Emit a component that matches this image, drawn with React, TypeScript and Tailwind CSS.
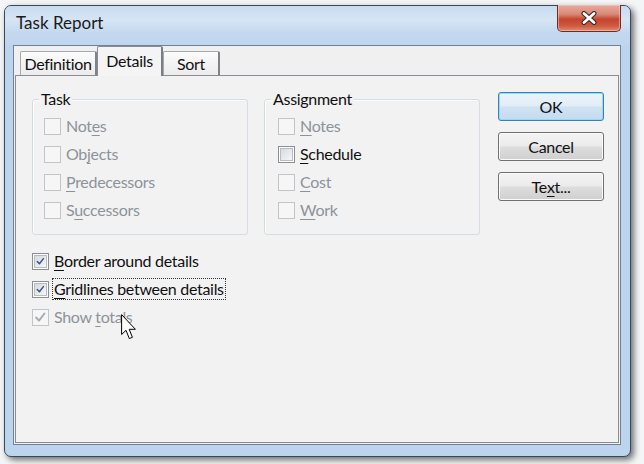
import type { ReactNode } from 'react';

const FONT = { fontFamily: 'Lato, "Noto Sans", sans-serif' };

function Check({ color }: { color: string }) {
  return (
    <svg viewBox="0 0 17 17" className="h-[15px] w-[15px]">
      <path d="M3.5 8.5 L6.8 12 L13 4" fill="none" stroke={color} strokeWidth="2.2" strokeLinecap="round" strokeLinejoin="round" />
    </svg>
  );
}

interface BoxProps {
  checked?: boolean;
  disabled?: boolean;
}

function Box({ checked, disabled }: BoxProps) {
  if (disabled) {
    return (
      <span className="flex h-[17px] w-[17px] shrink-0 items-center justify-center border border-[#c2c4c7] bg-[#f6f6f6]">
        {checked && <Check color="#a8abb0" />}
      </span>
    );
  }
  return (
    <span className="flex h-[17px] w-[17px] shrink-0 items-center justify-center border border-[#8b8e93] bg-[#fdfdfd] p-[1px]">
      <span className="flex h-full w-full items-center justify-center border border-[#b8bcc2] bg-[linear-gradient(135deg,#d8dadd,#f6f6f7)]">
        {checked && <Check color="#3d5088" />}
      </span>
    </span>
  );
}

interface RowProps extends BoxProps {
  label: ReactNode;
  focused?: boolean;
}

function CheckRow({ label, checked, disabled, focused }: RowProps) {
  return (
    <div className="flex h-[22px] items-center gap-[3px]">
      <Box checked={checked} disabled={disabled} />
      <span
        className={
          'border px-[1px] leading-[20px] ' +
          (focused ? 'border-dotted border-[#333]' : 'border-transparent') +
          (disabled ? ' text-[#8d929a]' : ' text-[#101010]')
        }
      >
        {label}
      </span>
    </div>
  );
}

function Key({ children }: { children: ReactNode }) {
  return <span className="underline decoration-1 underline-offset-[3px]">{children}</span>;
}

function Group({ title, children, className }: { title: string; children: ReactNode; className?: string }) {
  return (
    <div className={'relative h-[136px] w-[216px] rounded-[3px] border border-[#d3dde3] shadow-[inset_1px_1px_0_#fff]' + (className ?? '')}>
      <span className="absolute left-[6px] top-[-12px] bg-[#f2f2f2] px-[2px] leading-[22px] text-[#101010]">{title}</span>
      {children}
    </div>
  );
}

function Button({ children, primary }: { children: ReactNode; primary?: boolean }) {
  return (
    <div
      className={
        'flex h-[29px] w-[106px] items-center justify-center rounded-[3px] border text-[#111] ' +
        (primary
          ? 'border-[#3c7fb1] bg-[linear-gradient(180deg,#eaf3fb_0%,#e1edf7_48%,#cfe2f2_52%,#c4dbef_100%)] shadow-[inset_0_0_0_1px_#8fdcf7]'
          : 'border-[#707070] bg-[linear-gradient(180deg,#f4f4f4_0%,#ebebeb_48%,#dddddd_52%,#cfcfcf_100%)] shadow-[inset_0_0_0_1px_#fbfbfb]')
      }
    >
      {children}
    </div>
  );
}

function CloseButton() {
  return (
    <div className="-mt-px flex h-[27px] w-[64px] items-center justify-center rounded-b-[5px] border border-t-0 border-[#6e2b20] bg-[linear-gradient(180deg,#e8aa9e_0%,#d98a78_35%,#c4452e_55%,#cd5a40_80%,#e08d70_100%)] shadow-[inset_0_0_0_1px_rgba(255,210,200,0.5)]">
      <svg viewBox="0 0 18 14" className="h-[14px] w-[18px]">
        <path d="M4 2.5 L14 11.5 M14 2.5 L4 11.5" stroke="#3a2a2a" strokeWidth="5" strokeLinecap="round" />
        <path d="M4 2.5 L14 11.5 M14 2.5 L4 11.5" stroke="#ffffff" strokeWidth="2.8" strokeLinecap="round" />
      </svg>
    </div>
  );
}

function Tab({ children, selected, className }: { children: ReactNode; selected?: boolean; className?: string }) {
  return (
    <div
      className={
        'flex items-center justify-center rounded-t-[2px] border border-b-0 text-[#101010] ' +
        (selected
          ? 'relative z-10 -mb-px h-[30px] border-[#898c95] border-r-2 border-r-[#7a7d84] bg-[#f4f4f4] pb-[2px]'
          : 'h-[24px] border-[#a6a9ae] border-r-2 border-r-[#7f8288] bg-[linear-gradient(180deg,#fbfbfb,#ececec)]') +
        ' ' +
        (className ?? '')
      }
    >
      {children}
    </div>
  );
}

function Cursor() {
  return (
    <svg viewBox="0 0 16 27" className="absolute left-[121px] top-[314px] h-[27px] w-[16px]">
      <path d="M0.6 0.6 L0.6 20.5 L5 16.3 L8.3 24.6 L11.4 23.3 L8.2 15.3 L14.4 15.3 Z" fill="#fff" stroke="#000" strokeWidth="1" strokeLinejoin="round" />
    </svg>
  );
}

export default function App() {
  return (
    <div className="relative h-[464px] w-[644px] overflow-hidden bg-[#f4f5f6] text-[16px] tracking-[-0.3px]" style={FONT}>
      <div className="pl-[4px] pt-[5px]">
        <div className="flex h-[452px] w-[627px] flex-col rounded-[7px] border border-[#3b4858] bg-[#bcd5ef] shadow-[3px_3px_6px_rgba(0,0,0,0.55)]">
          <div className="flex h-[39px] items-start justify-between rounded-t-[6px] bg-[linear-gradient(180deg,#c7dbf0_0%,#d6e5f5_35%,#c3d8ee_70%,#c0d6ee_100%)] pr-[9px]">
            <span className="pl-[11px] pt-[6px] text-[17px] leading-[22px] tracking-normal text-[#1a1a1a]">Task Report</span>
            <CloseButton />
          </div>
          <div className="mx-[8px] mr-[9px] flex h-[400px] flex-col border border-[#75818e] bg-[#f0f0f0]">
            <div className="flex h-[29px] items-end pl-[6px]">
              <Tab className="w-[77px]">Definition</Tab>
              <Tab selected className="w-[66px]">Details</Tab>
              <Tab className="w-[57px]">Sort</Tab>
            </div>
            <div className="mx-[1px] mb-[1px] flex flex-1 flex-col border border-[#898c95] bg-[#f2f2f2] pl-[16px] pt-[16px]">
              <div className="flex items-start">
                <Group title="Task" className=" mt-[7px]">
                  <div className="flex flex-col gap-[6px] pl-[11px] pt-[15px]">
                    <CheckRow disabled label={<>Not<Key>e</Key>s</>} />
                    <CheckRow disabled label={<>Ob<Key>j</Key>ects</>} />
                    <CheckRow disabled label={<><Key>P</Key>redecessors</>} />
                    <CheckRow disabled label={<>S<Key>u</Key>ccessors</>} />
                  </div>
                </Group>
                <Group title="Assignment" className=" ml-[16px] mt-[7px]">
                  <div className="flex flex-col gap-[6px] pl-[13px] pt-[15px]">
                    <CheckRow disabled label={<><Key>N</Key>otes</>} />
                    <CheckRow label={<><Key>S</Key>chedule</>} />
                    <CheckRow disabled label={<><Key>C</Key>ost</>} />
                    <CheckRow disabled label={<><Key>W</Key>ork</>} />
                  </div>
                </Group>
                <div className="ml-[18px] flex flex-col gap-[11px]">
                  <Button primary>OK</Button>
                  <Button>Cancel</Button>
                  <Button>Te<Key>x</Key>t...</Button>
                </div>
              </div>
              <div className="mt-[15px] flex flex-col gap-[6px]">
                <CheckRow checked label={<><Key>B</Key>order around details</>} />
                <CheckRow checked focused label={<><Key>G</Key>ridlines between details</>} />
                <CheckRow checked disabled label={<>Show <Key>t</Key>otals</>} />
              </div>
            </div>
          </div>
        </div>
      </div>
      <Cursor />
    </div>
  );
}
